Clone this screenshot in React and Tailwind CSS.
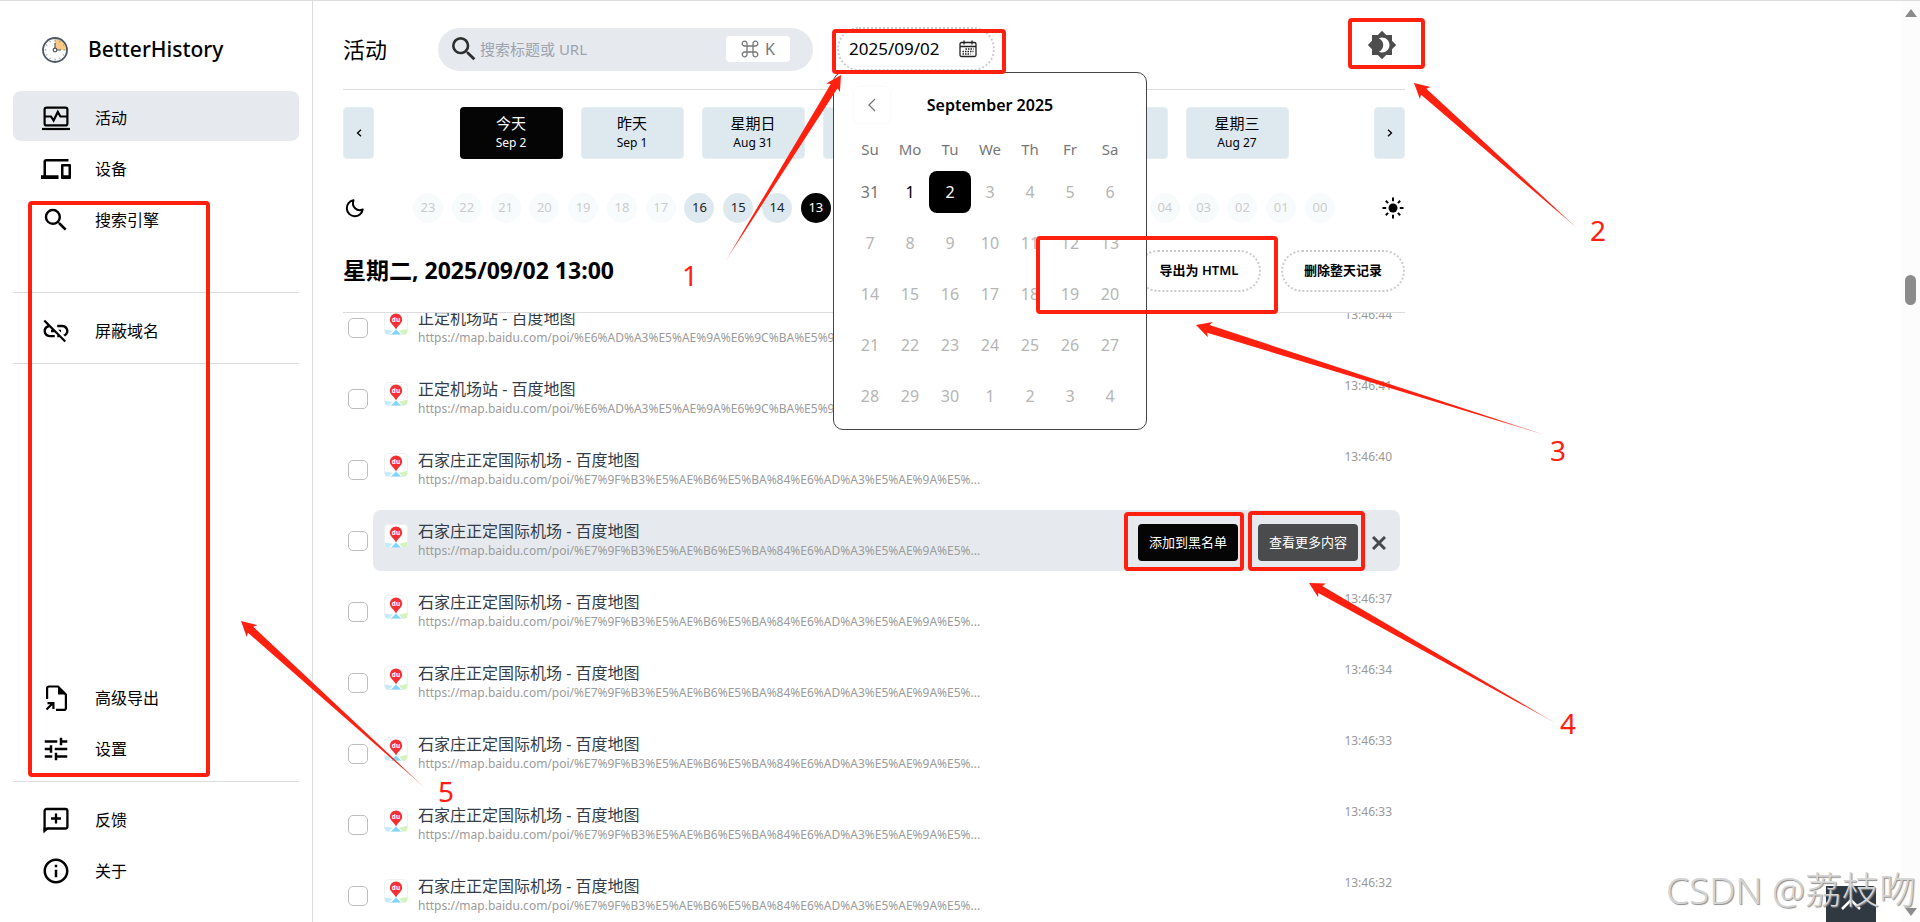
import { useState } from 'react'
import { MdBrightness4, MdDevices, MdInfoOutline, MdLinkOff, MdSearch, MdTune } from 'react-icons/md'

const DAYS = [
  { name: '今天', date: 'Sep 2' },
  { name: '昨天', date: 'Sep 1' },
  { name: '星期日', date: 'Aug 31' },
  { name: '星期六', date: 'Aug 30' },
  { name: '星期五', date: 'Aug 29' },
  { name: '星期四', date: 'Aug 28' },
  { name: '星期三', date: 'Aug 27' },
]

const HOURS = Array.from({ length: 24 }, (_, i) => String(23 - i).padStart(2, '0'))
const HOURS_WITH_DATA = ['16', '15', '14', '13', '12', '11', '10', '09']

const WEEKDAYS = ['Su', 'Mo', 'Tu', 'We', 'Th', 'Fr', 'Sa']
const CALENDAR = [31, ...Array.from({ length: 30 }, (_, i) => i + 1), 1, 2, 3, 4]

const STATION = {
  title: '正定机场站 - 百度地图',
  url: 'https://map.baidu.com/poi/%E6%AD%A3%E5%AE%9A%E6%9C%BA%E5%9C%BA%E7%AB%99',
}
const AIRPORT = {
  title: '石家庄正定国际机场 - 百度地图',
  url: 'https://map.baidu.com/poi/%E7%9F%B3%E5%AE%B6%E5%BA%84%E6%AD%A3%E5%AE%9A%E5%...',
}

const HISTORY = [
  { ...STATION, time: '13:46:44' },
  { ...STATION, time: '13:46:41' },
  { ...AIRPORT, time: '13:46:40' },
  { ...AIRPORT, time: '13:46:38', hovered: true },
  { ...AIRPORT, time: '13:46:37' },
  { ...AIRPORT, time: '13:46:34' },
  { ...AIRPORT, time: '13:46:33' },
  { ...AIRPORT, time: '13:46:33' },
  { ...AIRPORT, time: '13:46:32' },
]

// tip -> tail of every callout arrow
const ARROWS = [
  { id: 'a1', tip: [841, 75], tail: [725, 262] },
  { id: 'a2', tip: [1414, 83], tail: [1578, 229] },
  { id: 'a3', tip: [1196, 325], tail: [1545, 435] },
  { id: 'a4', tip: [1309, 583], tail: [1557, 724] },
  { id: 'a5', tip: [241, 621], tail: [425, 788] },
]

function LogoIcon() {
  return (
    <svg width="26" height="26" viewBox="0 0 26 26" aria-hidden="true">
      <circle cx="13" cy="13" r="12" fill="#fff" />
      <path d="M13 13V2a11 11 0 0 1 11 11z" fill="#ffc983" />
      <circle cx="13" cy="13" r="12" fill="none" stroke="#4d5866" strokeWidth="1.800" />
      <g stroke="#8a94a3" strokeWidth="1">
        <path d="M13 2.500v2M13 21.500v2M2.500 13h2M21.500 13h2M7.700 3.900l.8 1.400M3.900 7.700l1.400.8M3.900 18.300l1.400-.8M7.700 22.100l.8-1.400M18.300 22.100l-.8-1.400M22.100 18.300l-1.400-.8M18.300 3.900l-.8 1.400M22.100 7.700l-1.400.8" />
      </g>
      <path d="M13 13V6M13 13h6" stroke="#4d5866" strokeWidth="1.200" />
      <circle cx="13" cy="13" r="1.800" fill="#fff" stroke="#4d5866" strokeWidth="1.200" />
    </svg>
  )
}

function ActivityIcon() {
  return (
    <svg width="30" height="30" viewBox="0 0 30 30" fill="none" stroke="#000" strokeWidth="2.200" aria-hidden="true">
      <rect x="3.600" y="4.600" width="22.800" height="17.800" rx="2" />
      <path d="M4 13.500h6l2.600 4 4.200-8.600 2.600 4.600H26" />
      <path d="M1 26h28" />
    </svg>
  )
}

function ExportIcon() {
  return (
    <svg width="30" height="30" viewBox="0 0 30 30" fill="none" stroke="#000" strokeWidth="2.200" aria-hidden="true">
      <path d="M6.100 16V5.500a2 2 0 0 1 2-2H17l7.900 8v13.400a2 2 0 0 1-2 2H15" />
      <path d="M17 3v8.500h8z" fill="#000" stroke="none" />
      <path d="M5.500 26.500l6-6M6.500 20.100h5.900v6" />
    </svg>
  )
}

function FeedbackIcon() {
  return (
    <svg width="30" height="30" viewBox="0 0 30 30" fill="none" aria-hidden="true">
      <path d="M3.600 25V6a2 2 0 0 1 2-2h18.800a2 2 0 0 1 2 2v15.500a2 2 0 0 1-2 2H7.200z" stroke="#000" strokeWidth="2.300" />
      <path d="M2.500 28.500v-6h6z" fill="#000" />
      <path d="M15 8.500v10M10 13.500h10" stroke="#000" strokeWidth="2.300" />
    </svg>
  )
}

function MoonIcon() {
  return (
    <svg width="24" height="24" viewBox="0 0 24 24" fill="none" stroke="#000" strokeWidth="2" aria-hidden="true">
      <path d="M10.500 4.300a8 8 0 1 0 9.200 9.200c-5.600 2.700-11.600-3.100-9.200-9.200z" strokeLinejoin="round" />
    </svg>
  )
}

function SunIcon() {
  return (
    <svg width="24" height="24" viewBox="0 0 24 24" stroke="#000" strokeWidth="2" aria-hidden="true">
      <circle cx="12" cy="12" r="4.500" stroke="none" />
      <path d="M12 1.500v3.700M12 18.800v3.700M1.500 12h3.700M18.800 12h3.700M4.800 4.800l2.300 2.300M16.900 16.900l2.300 2.300M4.800 19.200l2.300-2.300M16.900 7.100l2.300-2.300" />
    </svg>
  )
}

function CalendarIcon() {
  return (
    <svg width="18" height="18" viewBox="0 0 18 18" fill="none" stroke="#222" aria-hidden="true">
      <rect x="1" y="2.500" width="16" height="14" rx="1.500" strokeWidth="1.300" />
      <path d="M1 6.500h16M5 .5v4M13 .5v4" strokeWidth="1.300" />
      <path d="M6.500 9h8M3.500 11.500h11M3.500 14h8" strokeWidth="1.500" strokeDasharray="1.500 1" />
    </svg>
  )
}

function MapFavicon() {
  return (
    <svg className="shrink-0" width="24" height="24" viewBox="0 0 24 24" aria-hidden="true">
      <rect x=".5" y=".5" width="23" height="23" rx="4" fill="#fff" stroke="#eef0f2" />
      <path d="M.800 18.500l8 1.200-4 3.800H4a3.200 3.200 0 0 1-3.200-3z" fill="#c5ecfd" />
      <path d="M12 18.500l5 5H7z" fill="#7fd6fb" />
      <path d="M15 19.800l8.200-2v2.700a3.200 3.200 0 0 1-3.200 3h-1.500z" fill="#d3f3bf" />
      <path d="M12 2.500a6.200 6.200 0 0 1 6.200 6.200c0 3.500-4.300 5.600-6.200 9.800-1.900-4.200-6.200-6.300-6.200-9.800A6.200 6.200 0 0 1 12 2.500z" fill="#f62f33" />
      <text x="12" y="11" textAnchor="middle" fontSize="6.500" fontWeight="700" fill="#fff">du</text>
    </svg>
  )
}

function NavItem({ icon, label, active }) {
  return (
    <a
      href="#"
      className={`flex h-[50px] items-center gap-6 rounded-lg pt-1 pl-7 text-base text-black ${active ? 'bg-[#e6eaee]' : ''}`}
    >
      {icon}
      <span>{label}</span>
    </a>
  )
}

function Sidebar() {
  return (
    <aside className="flex w-[313px] shrink-0 flex-col border-r border-[#dcdcdc] px-[13px] pb-7">
      <div className="flex h-[90px] items-center gap-5 pt-2 pl-[29px]">
        <LogoIcon />
        <span className="text-[21px] font-medium text-black">BetterHistory</span>
      </div>
      <nav className="flex flex-1 flex-col gap-px">
        <NavItem icon={<ActivityIcon />} label="活动" active />
        <NavItem icon={<MdDevices size={30} />} label="设备" />
        <NavItem icon={<MdSearch size={30} />} label="搜索引擎" />
        <hr className="mt-12 mb-2.5 border-[#dcdcdc]" />
        <NavItem icon={<MdLinkOff size={30} />} label="屏蔽域名" />
        <hr className="mt-2 mb-2.5 border-[#dcdcdc]" />
        <div className="flex-1" />
        <NavItem icon={<ExportIcon />} label="高级导出" />
        <NavItem icon={<MdTune size={30} />} label="设置" />
        <hr className="mt-2 mb-2.5 border-[#dcdcdc]" />
        <NavItem icon={<FeedbackIcon />} label="反馈" />
        <NavItem icon={<MdInfoOutline size={30} />} label="关于" />
      </nav>
    </aside>
  )
}

function dayClass(index) {
  if (index === 2) return 'h-[42px] w-[42px] rounded-lg bg-black text-white'
  if (index === 0) return 'h-[42px] w-10 text-[#777]'
  if (index === 1) return 'h-[42px] w-10 text-black'
  return 'h-[42px] w-10 text-[#b5b5b5]'
}

function DatePopup() {
  return (
    <div className="absolute top-full -left-1 z-20 mt-px h-[358px] w-[314px] rounded-[10px] border border-[#444] bg-white px-4 pt-3.5">
      <div className="flex items-center pl-1">
        <button type="button" aria-label="Previous month" className="flex h-9 w-9 items-center justify-center rounded-md shadow-[0_0_3px_rgba(0,0,0,0.06)]">
          <svg width="8" height="14" viewBox="0 0 8 14" fill="none" stroke="#777" strokeWidth="1.300">
            <path d="M7 1L1 7l6 6" />
          </svg>
        </button>
        <div className="flex-1 pr-10 text-center text-base font-semibold text-black">September 2025</div>
      </div>
      <div className="mt-3.5 grid grid-cols-7 text-center text-[15px] leading-6 text-[#777]">
        {WEEKDAYS.map((d) => <span key={d}>{d}</span>)}
      </div>
      <div className="mt-2.5 grid grid-cols-7 justify-items-center gap-y-[9px] text-base">
        {CALENDAR.map((d, i) => (
          <button type="button" key={i} className={dayClass(i)}>{d}</button>
        ))}
      </div>
    </div>
  )
}

function Header({ query, setQuery }) {
  return (
    <header className="flex h-[89px] shrink-0 items-center border-b border-[#dcdcdc] pt-2">
      <h1 className="w-[95px] text-[22px] text-black">活动</h1>
      <div className="flex h-[43px] w-[375px] items-center rounded-full bg-[#e6eaee] pr-[23px] pl-2.5">
        <MdSearch size={32} className="shrink-0 text-[#2e2e2e]" />
        <input
          type="text"
          aria-label="搜索标题或 URL"
          placeholder="搜索标题或 URL"
          value={query}
          onChange={(e) => setQuery(e.target.value)}
          className="min-w-0 flex-1 bg-transparent text-[15px] outline-none placeholder:text-[#9ca3af]"
        />
        <kbd className="flex h-[26px] w-16 items-center justify-center gap-1.5 rounded bg-white font-[inherit] text-base text-[#777]">
          <svg width="18" height="18" viewBox="0 0 18 18" fill="none" stroke="#777" strokeWidth="1.300" aria-hidden="true">
            <path d="M6 6h6v6H6zM6 6H3.700A2.400 2.400 0 1 1 6 3.700zM12 6V3.700A2.400 2.400 0 1 1 14.300 6zM12 12h2.300A2.400 2.400 0 1 1 12 14.300zM6 12v2.300A2.400 2.400 0 1 1 3.700 12z" />
          </svg>
          K
        </kbd>
      </div>
      <div className="relative ml-6">
        <button type="button" className="flex h-11 w-[158px] items-center justify-between rounded-full border-2 border-dotted border-[#ccc] pr-4 pl-2.5 text-[17px] text-black">
          2025/09/02
          <CalendarIcon />
        </button>
        <DatePopup />
      </div>
      <button type="button" aria-label="Theme" className="mr-2 mb-2 ml-auto text-[#4d4d4d]">
        <MdBrightness4 size={30} />
      </button>
    </header>
  )
}

function ArrowButton({ flip }) {
  return (
    <button type="button" aria-label={flip ? 'Next' : 'Previous'} className="flex h-[52px] w-[31px] items-center justify-center rounded border border-[#e6eef2] bg-[#dde9ef]">
      <svg className={flip ? 'rotate-180' : ''} width="6" height="8" viewBox="0 0 6 8" fill="none" stroke="#000" strokeWidth="1.300">
        <path d="M5 .7L1.500 4 5 7.300" />
      </svg>
    </button>
  )
}

function DayStrip() {
  return (
    <div className="flex items-center justify-between pt-[17px]">
      <ArrowButton />
      <div className="flex gap-[18px]">
        {DAYS.map((day, i) => (
          <button
            type="button"
            key={day.date}
            className={`h-[52px] w-[103px] rounded ${i === 0 ? 'bg-[#050505] text-white' : 'border border-[#e6eef2] bg-[#dde9ef] text-black'}`}
          >
            <span className="block text-[15px] leading-5">{day.name}</span>
            <span className="block text-xs leading-5">{day.date}</span>
          </button>
        ))}
      </div>
      <ArrowButton flip />
    </div>
  )
}

function hourClass(hour) {
  if (hour === '13') return 'bg-[#050505] text-white'
  if (HOURS_WITH_DATA.includes(hour)) return 'bg-[#dde9ef] text-[#222]'
  return 'bg-[#f7fbfc] text-[#ccc]'
}

function HourStrip() {
  return (
    <div className="mt-[34px] flex items-center">
      <MoonIcon />
      <div className="mx-[46px] flex flex-1 justify-between">
        {HOURS.map((hour) => (
          <button type="button" key={hour} className={`h-[30px] w-[30px] rounded-full text-[13px] ${hourClass(hour)}`}>
            {hour}
          </button>
        ))}
      </div>
      <SunIcon />
    </div>
  )
}

function HistoryRow({ item }) {
  return (
    <li className="flex h-[61px] items-center">
      <input
        type="checkbox"
        aria-label={item.title}
        className="mx-[5px] h-5 w-5 shrink-0 appearance-none rounded-[5px] border border-[#bdbdbd] bg-white"
      />
      <div className={`mr-[5px] flex h-full min-w-0 flex-1 items-start rounded-lg pr-2 pl-[11px] ${item.hovered ? 'bg-[#e6eaee]' : ''}`}>
        <div className="pt-3.5">
          <MapFavicon />
        </div>
        <div className="w-[590px] pt-[11px] pl-2.5">
          <a href="#" className="block truncate text-base leading-5 text-[#333c48]">{item.title}</a>
          <p className="truncate text-xs leading-5 text-[#9b9b9b]">{item.url}</p>
        </div>
        {item.hovered ? (
          <div className="ml-auto flex h-full items-center pt-1 text-[13px] text-white">
            <button type="button" className="h-[37px] w-[100px] rounded bg-[#050505]">添加到黑名单</button>
            <button type="button" className="ml-5 h-[37px] w-[100px] rounded bg-[#4a4b4d]">查看更多内容</button>
            <button type="button" aria-label="删除" className="ml-3.5 mr-1.5">
              <svg width="14" height="14" viewBox="0 0 14 14" stroke="#444a50" strokeWidth="3">
                <path d="M1 1l12 12M13 1L1 13" />
              </svg>
            </button>
          </div>
        ) : (
          <time className="ml-auto pt-2 text-xs leading-5 text-[#999]">{item.time}</time>
        )}
      </div>
    </li>
  )
}

function arrowPoints([x, y], [tx, ty]) {
  const len = Math.hypot(tx - x, ty - y)
  const ux = (tx - x) / len
  const uy = (ty - y) / len
  const at = (along, side) => `${x + ux * along - uy * side},${y + uy * along + ux * side}`
  return [at(0, 0), at(15, 8), at(13, 4), at(len, 0), at(13, -4), at(15, -8)].join(' ')
}

function Callouts() {
  const box = 'absolute rounded border-4 border-[#ff2010]'
  const num = 'absolute text-[28px] leading-8 text-[#ff2010]'
  return (
    <div className="pointer-events-none absolute inset-0 z-30">
      <div className={`${box} top-[28px] left-[832px] h-[45px] w-[174px]`} />
      <div className={`${box} top-[17px] left-[1348px] h-[51px] w-[77px]`} />
      <div className={`${box} top-[235px] left-[1036px] h-[78px] w-[242px]`} />
      <div className={`${box} top-[511px] left-[1124px] h-[59px] w-[120px]`} />
      <div className={`${box} top-[510px] left-[1248px] h-[60px] w-[117px]`} />
      <div className={`${box} top-[200px] left-[28px] h-[576px] w-[182px]`} />
      <svg className="absolute -top-px left-0" width="1920" height="922" aria-hidden="true">
        {ARROWS.map(({ id, tip, tail }) => (
          <g key={id}>
            <linearGradient id={id} gradientUnits="userSpaceOnUse" x1={tip[0]} y1={tip[1]} x2={tail[0]} y2={tail[1]}>
              <stop offset="0.85" stopColor="#ff2010" />
              <stop offset="1" stopColor="#ff2010" stopOpacity="0.4" />
            </linearGradient>
            <polygon points={arrowPoints(tip, tail)} fill={`url(#${id})`} />
          </g>
        ))}
      </svg>
      <span className={`${num} top-[258px] left-[682px]`}>1</span>
      <span className={`${num} top-[213px] left-[1590px]`}>2</span>
      <span className={`${num} top-[433px] left-[1550px]`}>3</span>
      <span className={`${num} top-[706px] left-[1560px]`}>4</span>
      <span className={`${num} top-[774px] left-[438px]`}>5</span>
    </div>
  )
}

function App() {
  const [query, setQuery] = useState('')

  return (
    <div className="relative flex h-screen overflow-hidden border-t border-[#dcdcdc] bg-white font-['Noto_Sans','Noto_Sans_CJK_SC',sans-serif]">
      <Sidebar />
      <main className="flex min-w-0 flex-1 flex-col px-[30px]">
        <div className="flex min-h-0 w-full max-w-[1062px] flex-1 flex-col">
          <Header query={query} setQuery={setQuery} />
          <DayStrip />
          <HourStrip />
          <div className="mt-[22px] flex h-[68px] shrink-0 items-center border-b border-[#dcdcdc] pb-4">
            <h2 className="text-[23px] font-bold text-black">星期二, 2025/09/02 13:00</h2>
            <div className="ml-auto flex gap-5 text-[13px] font-semibold text-black">
              <button type="button" className="h-[42px] w-[124px] rounded-full border-2 border-dotted border-[#ccc]">导出为 HTML</button>
              <button type="button" className="h-[42px] w-[124px] rounded-full border-2 border-dotted border-[#ccc]">删除整天记录</button>
            </div>
          </div>
          <div className="min-h-0 flex-1 overflow-hidden">
            <ul className="-mt-4 flex flex-col gap-2.5">
              {HISTORY.map((item, i) => <HistoryRow key={i} item={item} />)}
            </ul>
          </div>
        </div>
      </main>

      {/* scroll track */}
      <div className="flex w-[19px] flex-col items-center bg-[#fcfcfc] pt-2 pb-1.5">
        <svg width="12" height="8" viewBox="0 0 12 8" fill="#8b8b8b"><path d="M6 0l6 8H0z" /></svg>
        <div className="mt-[258px] h-[30px] w-[11px] rounded-full bg-[#8b8b8b]" />
        <svg className="mt-auto" width="12" height="8" viewBox="0 0 12 8" fill="#8b8b8b"><path d="M6 8L0 0h12z" /></svg>
      </div>

      <button type="button" aria-label="Back to top" className="absolute right-11 bottom-0 flex h-9 w-[50px] items-center justify-center rounded-tr bg-[#303841]">
        <svg width="20" height="12" viewBox="0 0 20 12" fill="none" stroke="#fff" strokeWidth="2.500">
          <path d="M1 11l9-9 9 9" />
        </svg>
      </button>
      <p className="absolute right-1 bottom-3 z-20 text-[37px] leading-10 font-light text-[#d4d4d4] [text-shadow:1px_1px_1px_#8a8a8a]">CSDN @荔枝吻</p>

      <Callouts />
    </div>
  )
}

export default App
